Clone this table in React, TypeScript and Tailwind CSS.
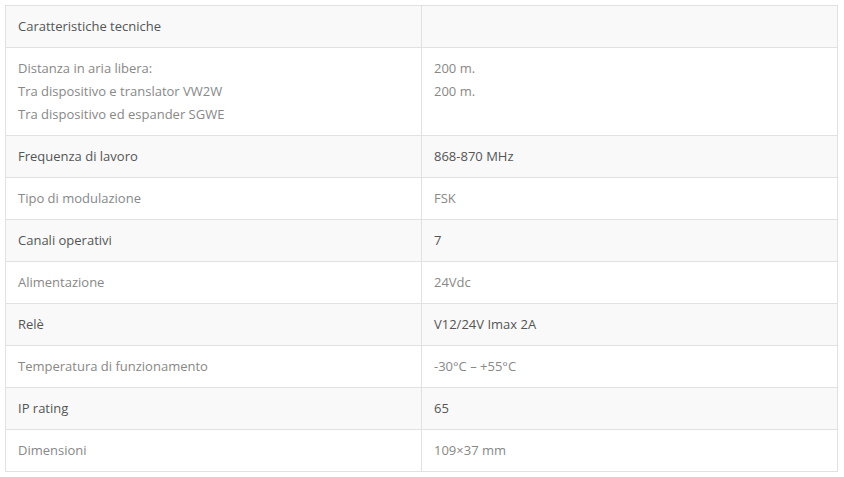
const rows: { label: string[]; value: string[] }[] = [
  { label: ['Caratteristiche tecniche'], value: [''] },
  {
    label: ['Distanza in aria libera:', 'Tra dispositivo e translator VW2W', 'Tra dispositivo ed espander SGWE'],
    value: ['200 m.', '200 m.'],
  },
  { label: ['Frequenza di lavoro'], value: ['868-870 MHz'] },
  { label: ['Tipo di modulazione'], value: ['FSK'] },
  { label: ['Canali operativi'], value: ['7'] },
  { label: ['Alimentazione'], value: ['24Vdc'] },
  { label: ['Relè'], value: ['V12/24V Imax 2A'] },
  { label: ['Temperatura di funzionamento'], value: ['-30°C – +55°C'] },
  { label: ['IP rating'], value: ['65'] },
  { label: ['Dimensioni'], value: ['109×37 mm'] },
]

export default function App() {
  return (
    <div className="bg-white p-[5px] font-['Open_Sans',sans-serif] text-[13px] leading-[23px]">
      <table className="w-[833px] table-fixed border-collapse">
        <tbody>
          {rows.map((row, i) => (
            <tr
              key={i}
              className={i % 2 === 0 ? 'bg-[#f9f9f9] text-[#555]' : 'bg-white text-[#888]'}
            >
              <td className="w-1/2 border border-[#e1e1e1] px-3 py-[9px] align-top">
                {row.label.map((l, j) => (
                  <div key={j}>{l}</div>
                ))}
              </td>
              <td className="w-1/2 border border-[#e1e1e1] px-3 py-[9px] align-top">
                {row.value.map((v, j) => (
                  <div key={j}>{v || '\u00a0'}</div>
                ))}
              </td>
            </tr>
          ))}
        </tbody>
      </table>
    </div>
  )
}
